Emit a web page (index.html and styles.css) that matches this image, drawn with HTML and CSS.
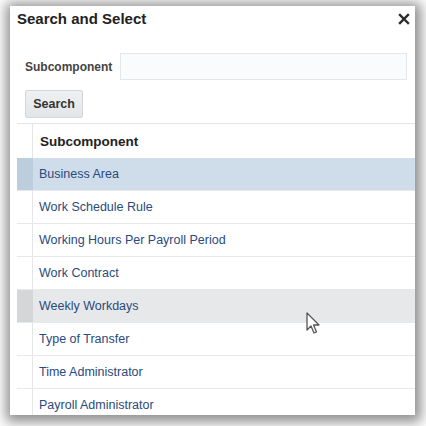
FILE: index.html
```html
<!DOCTYPE html>
<html>
<head>
<meta charset="utf-8">
<link rel="stylesheet" href="styles.css">
</head>
<body>
<div class="dialog">
  <div class="titlebar">
    <span class="title">Search and Select</span>
    <svg class="close" width="12" height="12" viewBox="0 0 12 12"><path d="M2 2 L10 10 M10 2 L2 10" stroke="#2b2b2b" stroke-width="2.4" stroke-linecap="square"/></svg>
  </div>
  <div class="form">
    <div class="field">
      <label class="label">Subcomponent</label>
      <div class="input"></div>
    </div>
    <div class="button">Search</div>
  </div>
  <div class="table">
    <div class="row head"><div class="lead"></div><div class="cell">Subcomponent</div></div>
    <div class="row selected"><div class="lead"></div><div class="cell">Business Area</div></div>
    <div class="row"><div class="lead"></div><div class="cell">Work Schedule Rule</div></div>
    <div class="row"><div class="lead"></div><div class="cell">Working Hours Per Payroll Period</div></div>
    <div class="row"><div class="lead"></div><div class="cell">Work Contract</div></div>
    <div class="row hover"><div class="lead"></div><div class="cell">Weekly Workdays</div></div>
    <div class="row"><div class="lead"></div><div class="cell">Type of Transfer</div></div>
    <div class="row"><div class="lead"></div><div class="cell">Time Administrator</div></div>
    <div class="row"><div class="lead"></div><div class="cell">Payroll Administrator</div></div>
  </div>
  <svg class="cursor" width="16" height="24" viewBox="0 0 16 24"><path d="M1 1 L1 18 L5 14 L8 21 L10.5 20 L7.5 13 L13 13 Z" fill="#fff" stroke="#555" stroke-width="1.3" stroke-linejoin="round"/></svg>
</div>
</body>
</html>
```
FILE: styles.css
```css
html, body {
  margin: 0;
  padding: 0;
  background: #ffffff;
}
body {
  width: 426px;
  height: 426px;
  overflow: hidden;
  font-family: "Liberation Sans", Arial, sans-serif;
}
.dialog {
  position: relative;
  margin: 6px 0 0 10px;
  width: 405px;
  height: 409px;
  background: #fff;
  box-shadow: 1px 2px 12px 5px rgba(0,0,0,0.45);
  overflow: hidden;
}
.titlebar {
  display: flex;
  justify-content: space-between;
  align-items: center;
  padding: 4px 5px 0 7px;
  height: 18px;
}
.title {
  font-size: 15px;
  font-weight: bold;
  color: #222;
  line-height: 18px;
}
.close {
  display: block;
}
.form {
  padding: 25px 0 0 15px;
}
.field {
  display: flex;
  align-items: center;
  gap: 8px;
}
.label {
  font-size: 12px;
  font-weight: bold;
  color: #444;
  line-height: 16px;
}
.input {
  width: 285px;
  height: 25px;
  border: 1px solid #e4e6e8;
  background: #fafbfc;
}
.button {
  margin-top: 10px;
  width: 56px;
  height: 26px;
  border: 1px solid #d4d6d8;
  border-radius: 2px;
  background: linear-gradient(#eef0f2, #e3e6e9);
  font-size: 12.5px;
  font-weight: bold;
  color: #333;
  display: flex;
  align-items: center;
  justify-content: center;
}
.table {
  margin: 5px 0 0 7px;
  border-top: 1px solid #e3e5e8;
}
.row {
  display: flex;
  height: 32px;
  border-bottom: 1px solid #e6e9ec;
}
.row.head {
  height: 34px;
  border-bottom: none;
}
.lead {
  width: 15px;
  border-right: 1px solid #e3e5e8;
}
.cell {
  flex: 1;
  display: flex;
  align-items: center;
  padding-left: 6px;
  font-size: 12.5px;
  color: #2a4a7c;
}
.head .cell {
  font-size: 13.5px;
  font-weight: bold;
  color: #222;
  padding-left: 7px;
}
.selected {
  background: #cfdcea;
}
.selected .lead {
  background: #bccddd;
  border-right-color: #bccddd;
}
.hover {
  background: #e7e8e9;
}
.hover .lead {
  background: #d5d6d7;
  border-right-color: #d5d6d7;
}
.cursor {
  position: absolute;
  left: 296px;
  top: 306px;
}
```
